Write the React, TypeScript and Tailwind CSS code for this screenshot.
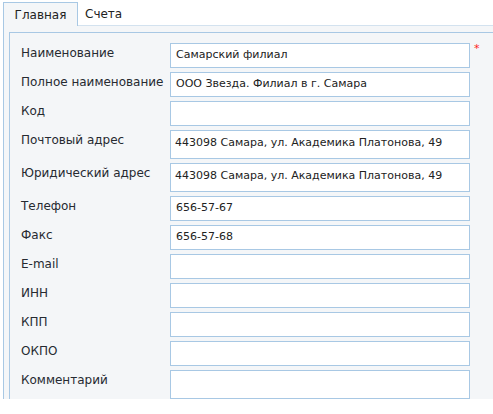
import React from "react";

type Field = {
  label: string;
  value?: string;
  tall?: boolean;
  required?: boolean;
};

const fields: Field[] = [
  { label: "Наименование", value: "Самарский филиал", required: true },
  { label: "Полное наименование", value: "ООО Звезда. Филиал в г. Самара" },
  { label: "Код" },
  { label: "Почтовый адрес", value: "443098 Самара, ул. Академика Платонова, 49", tall: true },
  { label: "Юридический адрес", value: "443098 Самара, ул. Академика Платонова, 49", tall: true },
  { label: "Телефон", value: "656-57-67" },
  { label: "Факс", value: "656-57-68" },
  { label: "E-mail" },
  { label: "ИНН" },
  { label: "КПП" },
  { label: "ОКПО" },
  { label: "Комментарий", tall: true },
];

function Row({ f }: { f: Field }) {
  return (
    <div className="flex mb-[4px]">
      <div className="w-[149px] pt-[3px] leading-[15px] text-[#262a31]">{f.label}</div>

      {f.tall ? (
        <div className="w-[300px] h-[29px] border border-[#a8c8e4] bg-white px-[4px] pt-[5px] text-[11px] leading-[14px] whitespace-nowrap text-[#222]">
          {f.value}
        </div>
      ) : (
        <div className="w-[300px] h-[25px] border border-[#a8c8e4] bg-white px-[5px] flex items-center text-[11px] whitespace-nowrap text-[#222]">
          {f.value}
        </div>
      )}

      {f.required && (
        <span className="ml-[4px] -mt-[2px] text-[#ff2020] text-[11px] leading-[15px]">*</span>
      )}
    </div>
  );
}

export default function App() {
  return (
    <div className="w-[493px] h-[414px] bg-white overflow-hidden font-['DejaVu_Sans',Verdana,sans-serif] text-[12px]">
      <div className="pt-[2px] pl-[3px]">

        {/* tabs */}

        <div className="flex h-[24px]">
          <div className="w-[75px] h-[24px] border-l border-t border-r border-[#a8c8e4] bg-[#f4f6f8] flex items-center justify-center text-[#222]">
            Главная
          </div>
          <div className="h-[24px] pl-[7px] pr-[12px] border-b border-[#d3e2ef] flex items-center text-[#222]">
            Счета
          </div>
          <div className="flex-1 h-[24px] border-b border-[#d3e2ef]" />
        </div>

        {/* body */}

        <div className="h-[373px] border-l border-[#a8c8e4] bg-[#f4f6f8] pt-[6px] pl-[5px]">
          <div className="h-full border-l border-t border-[#a8c8e4] pl-[11px] pt-[10px]">
            {fields.map((f) => (
              <Row key={f.label} f={f} />
            ))}
          </div>
        </div>

      </div>
    </div>
  );
}
